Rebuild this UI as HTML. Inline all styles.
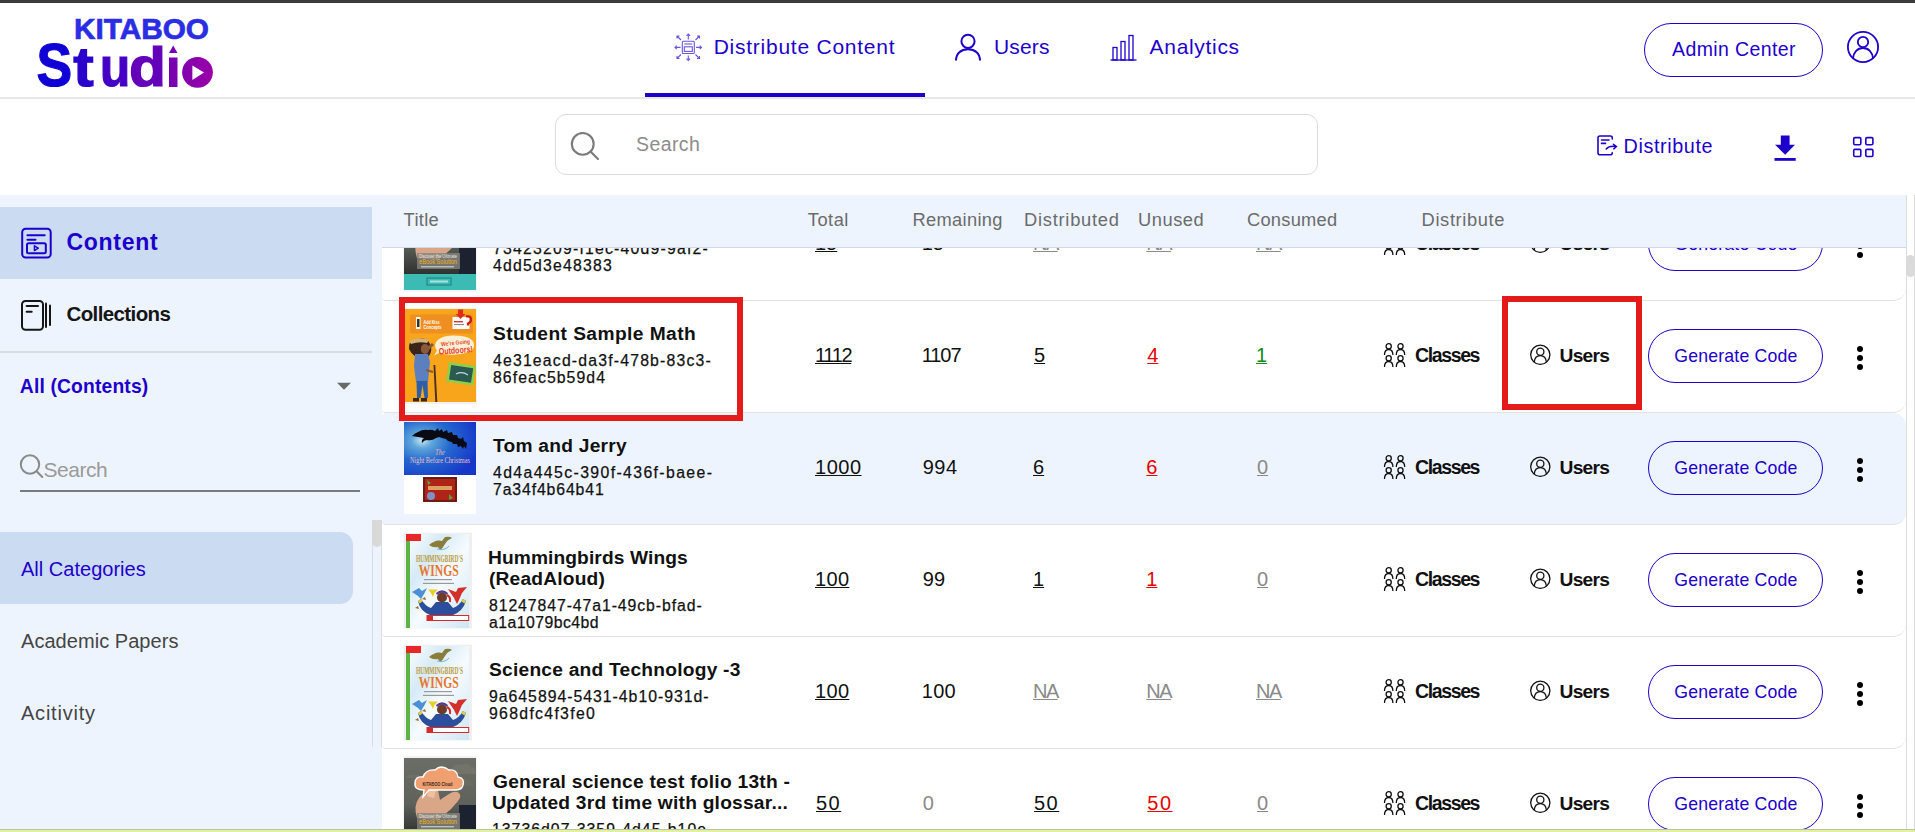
<!DOCTYPE html><html><head><meta charset="utf-8"><style>
html,body{margin:0;padding:0;width:1915px;height:832px;overflow:hidden;background:#fff;font-family:"Liberation Sans",sans-serif}
.t{position:absolute;white-space:pre}
</style></head><body><div style="position:absolute;left:0px;top:0px;width:1915px;height:99px;background:#fff"></div>
<div style="position:absolute;left:0px;top:0px;width:1915px;height:3px;background:#3c3c3c"></div>
<div style="position:absolute;left:0px;top:97px;width:1915px;height:2px;background:#e8e8e8"></div>
<svg style="position:absolute;left:30px;top:10px" width="200" height="85" viewBox="0 0 200 85">
<defs><linearGradient id="lg" x1="8" y1="0" x2="183" y2="0" gradientUnits="userSpaceOnUse">
<stop offset="0" stop-color="#0a00d6"/><stop offset="1" stop-color="#9a00a6"/></linearGradient></defs>
<text x="44" y="29.4" font-family="Liberation Sans" font-weight="bold" font-size="29.8" fill="#2a2de4" stroke="#2a2de4" stroke-width="0.7" textLength="135" lengthAdjust="spacingAndGlyphs">KITABOO</text>
<g font-family="Liberation Sans" font-weight="bold">
<text fill="#1000d6" stroke="#1000d6" stroke-width="1.2" font-size="62" transform="translate(6.46,76.4) scale(0.862,1)">S</text>
<text fill="#2a00cc" stroke="#2a00cc" stroke-width="1.2" font-size="55" transform="translate(43.25,76.4) scale(1.118,1)">t</text>
<text fill="#4400c4" stroke="#4400c4" stroke-width="1.2" font-size="55" transform="translate(69.94,76.4) scale(0.9,1)">u</text>
<text fill="#6400ba" stroke="#6400ba" stroke-width="1.2" font-size="55" transform="translate(99.11,76.4) scale(1.1,1)">d</text>
</g>
<rect x="139" y="47.5" width="8.5" height="29.5" fill="url(#lg)"/>
<path d="M139 43 L143.2 35.6 L147.5 43 Z" fill="url(#lg)"/>
<circle cx="167.5" cy="62.3" r="15.4" fill="url(#lg)"/>
<path d="M162.4 55.5 L174 62.5 L162.4 70 Z" fill="#fff"/>
</svg>
<svg style="position:absolute;left:670px;top:30px" width="36" height="34" viewBox="0 0 36 34"><g stroke="#6b55e0" stroke-width="1.1" fill="none">
<rect x="12.3" y="11.3" width="12" height="12.2" rx="1"/>
<line x1="14.3" y1="14" x2="22.3" y2="14"/><rect x="14.3" y="16.8" width="8" height="4.6"/>
<path d="M18.3 9.5 V4 M16.5 5.8 L18.3 4 L20.1 5.8"/>
<path d="M18.3 25.5 V30.5 M16.5 28.7 L18.3 30.5 L20.1 28.7"/>
<path d="M10.5 17.4 H5 M6.8 15.6 L5 17.4 L6.8 19.2"/>
<path d="M26 17.4 H31.5 M29.7 15.6 L31.5 17.4 L29.7 19.2"/>
<path d="M11 10 L7 6 M7 8.5 V6 H9.5"/><path d="M25.5 10 L29.5 6 M27 6 H29.5 V8.5"/>
<path d="M11 24.5 L7 28.5 M7 26 V28.5 H9.5"/><path d="M25.5 24.5 L29.5 28.5 M29.5 26 V28.5 H27"/>
</g></svg>
<div class="t" style="left:713.70px;top:35.92px;font-size:21px;line-height:21px;color:#1e00cc;letter-spacing:0.750px;">Distribute Content</div>
<div style="position:absolute;left:645px;top:93px;width:280px;height:4px;background:#1e00cc"></div>
<svg style="position:absolute;left:950px;top:30px" width="36" height="34" viewBox="0 0 36 34"><g stroke="#1e00cc" stroke-width="2" fill="none">
<circle cx="18" cy="11.3" r="6.6"/><path d="M6 30.5 C6 23.5 11 19.2 18 19.2 C25 19.2 30 23.5 30 30.5"/></g></svg>
<div class="t" style="left:994.00px;top:36.22px;font-size:21px;line-height:21px;color:#1e00cc;letter-spacing:0.166px;">Users</div>
<svg style="position:absolute;left:1106px;top:30px" width="36" height="34" viewBox="0 0 36 34"><g stroke="#1e00cc" stroke-width="1.3" fill="none">
<path d="M4.5 30 H30.5"/><rect x="7" y="17.5" width="4" height="12.5"/><rect x="15" y="11.5" width="4" height="18.5"/><rect x="23" y="5.5" width="4" height="24.5"/></g></svg>
<div class="t" style="left:1149.60px;top:36.22px;font-size:21px;line-height:21px;color:#1e00cc;letter-spacing:0.684px;">Analytics</div>
<div style="position:absolute;left:1644px;top:23px;width:179px;height:54px;border:1.3px solid #1e00cc;border-radius:27px;box-sizing:border-box"></div>
<div class="t" style="left:1672.00px;top:39.99px;font-size:19.5px;line-height:19.5px;color:#1e00cc;letter-spacing:0.389px;">Admin Center</div>
<svg style="position:absolute;left:1845px;top:29px" width="36" height="36" viewBox="0 0 36 36"><g stroke="#1e00cc" stroke-width="1.8" fill="none">
<circle cx="18" cy="18" r="15.1"/><circle cx="18" cy="13" r="5.2"/>
<path d="M8 29.5 C8.5 23 12.5 19 18 19 C23.5 19 27.5 23 28 29.5"/></g></svg>
<div style="position:absolute;left:0px;top:99px;width:1915px;height:96px;background:#fff"></div>
<div style="position:absolute;left:555px;top:114px;width:763px;height:61px;border:1px solid #dcdcdc;border-radius:11px;box-sizing:border-box;background:#fff"></div>
<svg style="position:absolute;left:566px;top:128px" width="36" height="36" viewBox="0 0 36 36"><g stroke="#7a7a7a" stroke-width="2.1" fill="none" stroke-linecap="round">
<circle cx="16.75" cy="15.9" r="10.9"/><path d="M24.5 23.6 L32 31"/></g></svg>
<div class="t" style="left:636.00px;top:135.09px;font-size:19.5px;line-height:19.5px;color:#8c8c8c;letter-spacing:0.412px;">Search</div>
<svg style="position:absolute;left:1594px;top:132px" width="26" height="26" viewBox="0 0 26 26"><g stroke="#1e00cc" stroke-width="1.6" fill="none" stroke-linecap="round">
<path d="M18.3 7 V6 Q18.3 4 16.3 4 H6 Q4 4 4 6 V20.8 Q4 22.8 6 22.8 H16.3 Q18.3 22.8 18.3 20.8"/>
<path d="M7.5 8 H15 M7.5 11.4 H11.5"/><path d="M12.2 17 Q15 13.6 21.5 14.4"/><path d="M19.5 12.3 L22.3 14.5 L19.8 16.8"/></g></svg>
<div class="t" style="left:1623.50px;top:137.24px;font-size:19.8px;line-height:19.8px;color:#1e00cc;letter-spacing:0.606px;">Distribute</div>
<svg style="position:absolute;left:1770px;top:130px" width="30" height="34" viewBox="0 0 30 34"><path d="M10.8 5.6 H19.6 V14.7 H25 L15.2 24.7 L5 14.7 H10.8 Z" fill="#1e00cc"/><rect x="4.5" y="28" width="21.2" height="2.8" fill="#1e00cc"/></svg>
<svg style="position:absolute;left:1848px;top:132px" width="30" height="30" viewBox="0 0 30 30"><g stroke="#1e00cc" stroke-width="1.6" fill="none">
<rect x="5.7" y="5.6" width="7.1" height="7.1" rx="1.2"/><rect x="17.8" y="5.6" width="7.1" height="7.1" rx="1.2"/>
<rect x="5.7" y="17.4" width="7.1" height="7.1" rx="1.2"/><rect x="17.8" y="17.4" width="7.1" height="7.1" rx="1.2"/></g></svg>
<div style="position:absolute;left:0px;top:195px;width:382px;height:637px;background:#edf4fe"></div>
<div style="position:absolute;left:0px;top:207px;width:372px;height:72px;background:#cadbf2"></div>
<svg style="position:absolute;left:16px;top:222px" width="40" height="40" viewBox="0 0 40 40"><g stroke="#1e00cc" stroke-width="2" fill="none" stroke-linecap="round">
<rect x="6.2" y="6.8" width="28.5" height="28.8" rx="3.5"/><path d="M11.4 13.2 H28.7 M11.4 17.7 H19.5"/>
<rect x="11" y="21.2" width="18.8" height="10.1" rx="1.5"/><path d="M18.4 23.8 L22.3 26.2 L18.4 28.6 Z" stroke-width="1.4" stroke-linejoin="round"/></g></svg>
<div class="t" style="left:66.50px;top:230.53px;font-size:23px;line-height:23px;color:#1e00cc;font-weight:bold;letter-spacing:0.715px;">Content</div>
<svg style="position:absolute;left:16px;top:295px" width="40" height="40" viewBox="0 0 40 40"><g stroke="#161616" stroke-width="2" fill="none" stroke-linecap="round">
<rect x="6" y="5.9" width="21" height="28.9" rx="3.5"/><path d="M10.6 11.1 H22 M10.6 16.8 H15.7"/>
<path d="M30 8.5 V32" /><path d="M34 10.5 V30"/></g></svg>
<div class="t" style="left:66.50px;top:304.04px;font-size:20.5px;line-height:20.5px;color:#161616;font-weight:bold;letter-spacing:-0.609px;font-weight:600;">Collections</div>
<div style="position:absolute;left:0px;top:351px;width:372px;height:2px;background:#dcdcdc"></div>
<div class="t" style="left:19.80px;top:377.16px;font-size:19.3px;line-height:19.3px;color:#1e00cc;font-weight:bold;letter-spacing:0.157px;">All (Contents)</div>
<svg style="position:absolute;left:332px;top:378px" width="24" height="16" viewBox="0 0 24 16"><path d="M5 4.7 H19 L12 11.7 Z" fill="#6a6a6a"/></svg>
<svg style="position:absolute;left:16px;top:451px" width="32" height="32" viewBox="0 0 32 32"><g stroke="#8a8a8a" stroke-width="2" fill="none" stroke-linecap="round">
<circle cx="14" cy="13.5" r="9.2"/><path d="M20.6 20.2 L26.3 26"/></g></svg>
<div class="t" style="left:43.60px;top:459.22px;font-size:21px;line-height:21px;color:#9a9a9a;letter-spacing:-0.492px;">Search</div>
<div style="position:absolute;left:20px;top:490px;width:340px;height:2px;background:#7a7a7a"></div>
<div style="position:absolute;left:0px;top:532px;width:353px;height:72px;background:#cadbf2;border-radius:0 13px 13px 0"></div>
<div class="t" style="left:21.00px;top:558.87px;font-size:20px;line-height:20px;color:#1e00cc;letter-spacing:0.015px;">All Categories</div>
<div class="t" style="left:21.00px;top:630.77px;font-size:20px;line-height:20px;color:#454545;letter-spacing:0.047px;">Academic Papers</div>
<div class="t" style="left:21.00px;top:702.67px;font-size:20px;line-height:20px;color:#454545;letter-spacing:0.777px;">Acitivity</div>
<div style="position:absolute;left:372px;top:520px;width:10px;height:227px;border:1px solid #d9dde3;border-bottom:none;box-sizing:border-box;background:#edf4fe"></div>
<div style="position:absolute;left:372px;top:520px;width:10px;height:27px;background:#d9d9d9;border-radius:0 0 5px 5px"></div>
<div style="position:absolute;left:382px;top:195px;width:1524px;height:52px;background:#edf4fe"></div>
<div style="position:absolute;left:382px;top:247px;width:1524px;height:582px;overflow:hidden"><div style="position:absolute;left:-382px;top:-247px;width:1915px;height:900px"><div style="position:absolute;left:382px;top:189px;width:1524px;height:112px;background:#fff;border-bottom:1px solid #e2e2e2;border-radius:4px 13px 13px 4px;box-sizing:border-box"></div><svg style="position:absolute;left:403px;top:196px" width="74" height="96" viewBox="0 0 74 96">
<rect x="0" y="0" width="74" height="96" fill="#f4f4f4"/>
<defs><linearGradient id="eg" x1="0" y1="0" x2="0" y2="1"><stop offset="0" stop-color="#6a6e66"/><stop offset="0.6" stop-color="#5e625b"/><stop offset="1" stop-color="#2e312f"/></linearGradient></defs>
<rect x="1" y="2" width="72" height="76" fill="url(#eg)"/>
<path d="M48 14 q3 -7 10 -5 q6 -4 10 2 q6 0 5 7 H46 q-3 -2 2 -4z" fill="#7d7870" opacity="0.6"/>
<path d="M3 22 q2 -5 8 -3 q5 -2 7 3 H3z" fill="#7a756d" opacity="0.5"/>
<path d="M46 26 q3 -5 9 -3 q5 -3 9 1 q6 0 6 6 H46z" fill="#757068" opacity="0.45"/>
<rect x="56" y="49" width="17" height="29" fill="#1c2230"/>
<path d="M14 62 q-4 -12 2 -20 q3 -5 7 -3 l2 -3 q2 -6 5 -7 q4 -1 5 5 l2 10 q4 -3 9 -6 q6 -4 10 -1 q3 3 -1 8 q-6 8 -14 14 l-6 5z" fill="#d9a688"/>
<path d="M24 40 l2 -8 q2 -5 5 -4 q3 1 2 6 l-2 8z" fill="#ecc0a0"/>
<path d="M12 27 q0 -7 8 -6 q3 -8 12 -7 q6 -6 14 0 q8 -1 9 7 q7 1 5 8 q-1 5 -8 5 H26 l-6 7 l1 -7 q-10 0 -9 -7z" fill="#f0a070" stroke="#fff" stroke-width="1.4"/>
<text x="19.5" y="29.5" font-family="Liberation Sans" font-weight="bold" font-size="5" fill="#3a2a20" textLength="30" lengthAdjust="spacingAndGlyphs">KITABOO Cloud</text>
<rect x="14" y="57" width="43" height="16" fill="#83837c" opacity="0.8"/>
<text x="16" y="61.5" font-family="Liberation Sans" font-size="4.5" fill="#e8e8e8" textLength="38" lengthAdjust="spacingAndGlyphs">Discover the Ultimate</text>
<text x="16" y="67.5" font-family="Liberation Sans" font-size="7" fill="#f0b020" textLength="38" lengthAdjust="spacingAndGlyphs">eBook Solution</text>
<rect x="18" y="70" width="33" height="1.4" fill="#ddd" opacity="0.7"/>
<rect x="1" y="78" width="72" height="16" fill="#3cbab4"/>
<rect x="24" y="82" width="24" height="7" fill="none" stroke="#1d7f7a" stroke-width="1"/>
<rect x="27" y="84.5" width="18" height="2" fill="#d8f4f2" opacity="0.7"/>
</svg><div class="t" style="left:493.00px;top:241.42px;font-size:15.8px;line-height:15.8px;color:#111;letter-spacing:1.208px;-webkit-text-stroke:0.25px #111;">73423209-f1ec-40d9-9af2-</div><div class="t" style="left:493.00px;top:258.42px;font-size:15.8px;line-height:15.8px;color:#111;letter-spacing:1.215px;-webkit-text-stroke:0.25px #111;">4dd5d3e48383</div><div class="t" style="left:815.00px;top:233.07px;font-size:20px;line-height:20px;color:#111;text-decoration:underline;text-decoration-thickness:1px;text-underline-offset:1px;">15</div><div class="t" style="left:921.70px;top:233.07px;font-size:20px;line-height:20px;color:#111;">15</div><div class="t" style="left:1033.00px;top:233.07px;font-size:20px;line-height:20px;color:#8a8a8a;letter-spacing:-1.543px;text-decoration:underline;text-decoration-thickness:1px;text-underline-offset:1px;">NA</div><div class="t" style="left:1146.30px;top:233.07px;font-size:20px;line-height:20px;color:#8a8a8a;letter-spacing:-1.543px;text-decoration:underline;text-decoration-thickness:1px;text-underline-offset:1px;">NA</div><div class="t" style="left:1256.00px;top:233.07px;font-size:20px;line-height:20px;color:#8a8a8a;letter-spacing:-1.543px;text-decoration:underline;text-decoration-thickness:1px;text-underline-offset:1px;">NA</div><svg style="position:absolute;left:1380px;top:228px" width="28" height="30" viewBox="0 0 28 30"><g stroke="#111" stroke-width="1.3" fill="none">
<circle cx="8.7" cy="6.3" r="2.6"/><path d="M4.5 15 q0 -5.5 4.2 -5.5 q4.2 0 4.2 5.5"/>
<circle cx="20.5" cy="6.3" r="2.6"/><path d="M16.3 15 q0 -5.5 4.2 -5.5 q4.2 0 4.2 5.5"/>
<circle cx="8.7" cy="18.3" r="2.6"/><path d="M4.5 27 q0 -5.5 4.2 -5.5 q4.2 0 4.2 5.5"/>
<circle cx="20.5" cy="18.3" r="2.6"/><path d="M16.3 27 q0 -5.5 4.2 -5.5 q4.2 0 4.2 5.5"/></g></svg><div class="t" style="left:1415.00px;top:234.29px;font-size:19.5px;line-height:19.5px;color:#111;font-weight:bold;letter-spacing:-1.380px;">Classes</div><svg style="position:absolute;left:1527px;top:230px" width="28" height="28" viewBox="0 0 28 28"><g stroke="#111" stroke-width="1.3" fill="none">
<circle cx="13.3" cy="12.8" r="9.6"/><circle cx="13.3" cy="9.8" r="3.6"/>
<path d="M7.2 20.3 q0.5 -6.7 6.1 -6.7 q5.6 0 6.1 6.7"/></g></svg><div class="t" style="left:1559.60px;top:234.14px;font-size:19.2px;line-height:19.2px;color:#111;font-weight:bold;letter-spacing:-0.766px;">Users</div><div style="position:absolute;left:1648px;top:217px;width:175px;height:54px;border:1.3px solid #1e00cc;border-radius:27px;box-sizing:border-box"></div><div class="t" style="left:1674.20px;top:235.51px;font-size:17.7px;line-height:17.7px;color:#1e00cc;letter-spacing:0.183px;">Generate Code</div><svg style="position:absolute;left:1852px;top:230px" width="16" height="32" viewBox="0 0 16 32"><g fill="#000"><circle cx="8" cy="7" r="3"/><circle cx="8" cy="16" r="3"/><circle cx="8" cy="25" r="3"/></g></svg><div style="position:absolute;left:382px;top:301px;width:1524px;height:112px;background:#fff;border-bottom:1px solid #e2e2e2;border-radius:4px 13px 13px 4px;box-sizing:border-box"></div><svg style="position:absolute;left:404px;top:308px" width="73" height="96" viewBox="0 0 73 96">
<rect x="0" y="0" width="73" height="96" fill="#f2f2f2"/>
<rect x="1" y="1" width="71" height="93" fill="#f8a51c"/>
<rect x="6" y="6.5" width="63" height="19" rx="2.5" fill="#ef8f22"/>
<rect x="12" y="9" width="4.5" height="12" fill="#fff7e0"/><rect x="13" y="11" width="2.5" height="8" fill="#333"/>
<text x="19.5" y="15.5" font-family="Liberation Sans" font-weight="bold" font-size="5" fill="#fff" textLength="16" lengthAdjust="spacingAndGlyphs">Add Kiss</text>
<text x="19.5" y="20.5" font-family="Liberation Sans" font-weight="bold" font-size="5" fill="#fff" textLength="18" lengthAdjust="spacingAndGlyphs">Concepts</text>
<rect x="48.5" y="9" width="17" height="12" fill="#fff"/><path d="M54 1.5 h5 v4.5 h2.5 l-5 5 l-5 -5 h2.5z" fill="#e22a1a"/>
<rect x="50" y="13" width="9" height="1.4" fill="#d33"/><rect x="50" y="16" width="10" height="1.1" fill="#888"/>
<path d="M62 8.5 q5 -1 5 3 q0 3 -3 4 v2" stroke="#c81818" stroke-width="2.2" fill="none"/>
<g transform="translate(0,10)"><path d="M31 27 q2 -9 18 -9.5 q20 0 21 9 q1 8 -18 10 q-10 1 -16 -2 l-6 3 l3 -5 q-2 -2 -2 -5.5z" fill="#fdf0d6"/>
<text x="37" y="27" font-family="Liberation Sans" font-weight="bold" font-size="6" fill="#e24a2e" textLength="29" lengthAdjust="spacingAndGlyphs" transform="rotate(-6 50 25)">We're Going</text>
<text x="34.7" y="35.5" font-family="Liberation Sans" font-weight="bold" font-size="9" fill="#e5392a" textLength="34" lengthAdjust="spacingAndGlyphs" transform="rotate(-4 50 32)">Outdoors!</text>
</g>
<path d="M45 54 l27 4 l-3 19.5 l-27 -4z" fill="#8ccf4a"/><path d="M47.2 57 l22 3.2 l-2.2 14.5 l-22 -3.2z" fill="#2a5a50"/>
<path d="M52 66 q6 -3 12 1" stroke="#c0d8e8" stroke-width="1.2" fill="none"/>
<g transform="translate(0,10)"><path d="M5 31 q-1 -8 8 -10 q10 -2 13 5 q3 6 -1 12 l-6 2 q-10 0 -14 -9z" fill="#3a2418"/>
<path d="M5 23 q9 -5 20 -1 l-2 3 q-8 -2 -16 1z" fill="#d8b27a"/>
<ellipse cx="21" cy="31" rx="4.2" ry="5" fill="#8a5a3a"/>
<path d="M23 29 l5 -4 l2 2 l-5 5z" fill="#8a5a3a"/>
<path d="M11 36 h13 l2 8 l-2 20 h-12 l-2 -16z" fill="#5b7fbf"/>
<path d="M12.5 63 h11 l0.5 17 h-3.5 l-2 -13 l-2 13 h-3.5z" fill="#2f5ea8"/>
<path d="M9 80 h6 v3.5 h-6z M17 80 h6 v3.5 h-6z" fill="#3a2818"/>
</g>
<path d="M29.5 57 l1.8 0 l2 37 h-2z" fill="#4a3020"/>
<path d="M22 62 l7 2" stroke="#8a5a3a" stroke-width="2"/>
</svg><div class="t" style="left:493.00px;top:323.64px;font-size:19.2px;line-height:19.2px;color:#111;font-weight:bold;letter-spacing:0.424px;">Student Sample Math</div><div class="t" style="left:493.00px;top:353.42px;font-size:15.8px;line-height:15.8px;color:#111;letter-spacing:1.182px;-webkit-text-stroke:0.25px #111;">4e31eacd-da3f-478b-83c3-</div><div class="t" style="left:493.00px;top:370.42px;font-size:15.8px;line-height:15.8px;color:#111;letter-spacing:1.077px;-webkit-text-stroke:0.25px #111;">86feac5b59d4</div><div class="t" style="left:815.00px;top:345.07px;font-size:20px;line-height:20px;color:#111;letter-spacing:-1.300px;text-decoration:underline;text-decoration-thickness:1px;text-underline-offset:1px;">1112</div><div class="t" style="left:921.70px;top:345.07px;font-size:20px;line-height:20px;color:#111;letter-spacing:-1.062px;">1107</div><div class="t" style="left:1034.00px;top:345.07px;font-size:20px;line-height:20px;color:#111;text-decoration:underline;text-decoration-thickness:1px;text-underline-offset:1px;">5</div><div class="t" style="left:1147.30px;top:345.07px;font-size:20px;line-height:20px;color:#e60000;text-decoration:underline;text-decoration-thickness:1px;text-underline-offset:1px;">4</div><div class="t" style="left:1256.00px;top:345.07px;font-size:20px;line-height:20px;color:#138a13;text-decoration:underline;text-decoration-thickness:1px;text-underline-offset:1px;">1</div><svg style="position:absolute;left:1380px;top:340px" width="28" height="30" viewBox="0 0 28 30"><g stroke="#111" stroke-width="1.3" fill="none">
<circle cx="8.7" cy="6.3" r="2.6"/><path d="M4.5 15 q0 -5.5 4.2 -5.5 q4.2 0 4.2 5.5"/>
<circle cx="20.5" cy="6.3" r="2.6"/><path d="M16.3 15 q0 -5.5 4.2 -5.5 q4.2 0 4.2 5.5"/>
<circle cx="8.7" cy="18.3" r="2.6"/><path d="M4.5 27 q0 -5.5 4.2 -5.5 q4.2 0 4.2 5.5"/>
<circle cx="20.5" cy="18.3" r="2.6"/><path d="M16.3 27 q0 -5.5 4.2 -5.5 q4.2 0 4.2 5.5"/></g></svg><div class="t" style="left:1415.00px;top:346.29px;font-size:19.5px;line-height:19.5px;color:#111;font-weight:bold;letter-spacing:-1.380px;">Classes</div><svg style="position:absolute;left:1527px;top:342px" width="28" height="28" viewBox="0 0 28 28"><g stroke="#111" stroke-width="1.3" fill="none">
<circle cx="13.3" cy="12.8" r="9.6"/><circle cx="13.3" cy="9.8" r="3.6"/>
<path d="M7.2 20.3 q0.5 -6.7 6.1 -6.7 q5.6 0 6.1 6.7"/></g></svg><div class="t" style="left:1559.60px;top:346.14px;font-size:19.2px;line-height:19.2px;color:#111;font-weight:bold;letter-spacing:-0.766px;">Users</div><div style="position:absolute;left:1648px;top:329px;width:175px;height:54px;border:1.3px solid #1e00cc;border-radius:27px;box-sizing:border-box"></div><div class="t" style="left:1674.20px;top:347.51px;font-size:17.7px;line-height:17.7px;color:#1e00cc;letter-spacing:0.183px;">Generate Code</div><svg style="position:absolute;left:1852px;top:342px" width="16" height="32" viewBox="0 0 16 32"><g fill="#000"><circle cx="8" cy="7" r="3"/><circle cx="8" cy="16" r="3"/><circle cx="8" cy="25" r="3"/></g></svg><div style="position:absolute;left:382px;top:413px;width:1524px;height:112px;background:#edf4fe;border-bottom:1px solid #e2e2e2;border-radius:4px 13px 13px 4px;box-sizing:border-box"></div><svg style="position:absolute;left:404px;top:422px" width="72" height="94" viewBox="0 0 72 94">
<defs><radialGradient id="tg" cx="0.25" cy="0.35" r="0.8"><stop offset="0" stop-color="#c8e6f2"/><stop offset="0.18" stop-color="#5fa6da"/><stop offset="0.5" stop-color="#2468d0"/><stop offset="1" stop-color="#1637c8"/></radialGradient></defs>
<rect x="0" y="0" width="72" height="92" fill="#fff"/>
<rect x="0" y="0" width="72" height="53" fill="url(#tg)"/>
<path d="M8 14 q3 -3 6 -4 q5 -3 10 -2 q4 -1 7 1 l3 -3 l1 3 l3 -2 l1 3 l4 -2 l1 3 l4 -1 l1 3 l4 0 l1 3 l3 1 l2 -2 l1 4 l3 2 l-1 6 l-2 -3 l-1 3 l-2 -3 l-3 1 l-1 -3 l-4 0 l-1 -2 l-4 -1 l-2 -2 l-4 -1 l-3 -1 l-3 1 q-4 3 -9 2 q-3 0 -5 3 q-1 -3 2 -5z" fill="#0a0a14"/>
<text x="31" y="33" font-family="Liberation Serif" font-style="italic" font-size="8" fill="#e8b0b8" textLength="10" lengthAdjust="spacingAndGlyphs">The</text>
<text x="6" y="40.5" font-family="Liberation Serif" font-size="7.5" fill="#efbfc6" textLength="60" lengthAdjust="spacingAndGlyphs">Night Before Christmas</text>
<rect x="19" y="55" width="34" height="25" fill="#b02418"/>
<rect x="20" y="56" width="32" height="23" fill="none" stroke="#2a1510" stroke-width="1"/>
<path d="M23 58 l4 3 l-3 2z M45 72 l4 4 l-4 2z M46 58 l3 2" fill="#5aa040"/>
<rect x="24" y="64" width="24" height="4" fill="#e8c070" opacity="0.8"/>
<circle cx="27" cy="74" r="4" fill="#8090c8"/>
</svg><div class="t" style="left:493.00px;top:435.64px;font-size:19.2px;line-height:19.2px;color:#111;font-weight:bold;letter-spacing:0.239px;">Tom and Jerry</div><div class="t" style="left:493.00px;top:465.42px;font-size:15.8px;line-height:15.8px;color:#111;letter-spacing:1.386px;-webkit-text-stroke:0.25px #111;">4d4a445c-390f-436f-baee-</div><div class="t" style="left:493.00px;top:482.42px;font-size:15.8px;line-height:15.8px;color:#111;letter-spacing:0.878px;-webkit-text-stroke:0.25px #111;">7a34f4b64b41</div><div class="t" style="left:815.00px;top:457.07px;font-size:20px;line-height:20px;color:#111;letter-spacing:0.510px;text-decoration:underline;text-decoration-thickness:1px;text-underline-offset:1px;">1000</div><div class="t" style="left:922.70px;top:457.07px;font-size:20px;line-height:20px;color:#111;letter-spacing:0.477px;">994</div><div class="t" style="left:1033.00px;top:457.07px;font-size:20px;line-height:20px;color:#111;text-decoration:underline;text-decoration-thickness:1px;text-underline-offset:1px;">6</div><div class="t" style="left:1146.30px;top:457.07px;font-size:20px;line-height:20px;color:#e60000;text-decoration:underline;text-decoration-thickness:1px;text-underline-offset:1px;">6</div><div class="t" style="left:1257.00px;top:457.07px;font-size:20px;line-height:20px;color:#8a8a8a;text-decoration:underline;text-decoration-thickness:1px;text-underline-offset:1px;">0</div><svg style="position:absolute;left:1380px;top:452px" width="28" height="30" viewBox="0 0 28 30"><g stroke="#111" stroke-width="1.3" fill="none">
<circle cx="8.7" cy="6.3" r="2.6"/><path d="M4.5 15 q0 -5.5 4.2 -5.5 q4.2 0 4.2 5.5"/>
<circle cx="20.5" cy="6.3" r="2.6"/><path d="M16.3 15 q0 -5.5 4.2 -5.5 q4.2 0 4.2 5.5"/>
<circle cx="8.7" cy="18.3" r="2.6"/><path d="M4.5 27 q0 -5.5 4.2 -5.5 q4.2 0 4.2 5.5"/>
<circle cx="20.5" cy="18.3" r="2.6"/><path d="M16.3 27 q0 -5.5 4.2 -5.5 q4.2 0 4.2 5.5"/></g></svg><div class="t" style="left:1415.00px;top:458.29px;font-size:19.5px;line-height:19.5px;color:#111;font-weight:bold;letter-spacing:-1.380px;">Classes</div><svg style="position:absolute;left:1527px;top:454px" width="28" height="28" viewBox="0 0 28 28"><g stroke="#111" stroke-width="1.3" fill="none">
<circle cx="13.3" cy="12.8" r="9.6"/><circle cx="13.3" cy="9.8" r="3.6"/>
<path d="M7.2 20.3 q0.5 -6.7 6.1 -6.7 q5.6 0 6.1 6.7"/></g></svg><div class="t" style="left:1559.60px;top:458.14px;font-size:19.2px;line-height:19.2px;color:#111;font-weight:bold;letter-spacing:-0.766px;">Users</div><div style="position:absolute;left:1648px;top:441px;width:175px;height:54px;border:1.3px solid #1e00cc;border-radius:27px;box-sizing:border-box"></div><div class="t" style="left:1674.20px;top:459.51px;font-size:17.7px;line-height:17.7px;color:#1e00cc;letter-spacing:0.183px;">Generate Code</div><svg style="position:absolute;left:1852px;top:454px" width="16" height="32" viewBox="0 0 16 32"><g fill="#000"><circle cx="8" cy="7" r="3"/><circle cx="8" cy="16" r="3"/><circle cx="8" cy="25" r="3"/></g></svg><div style="position:absolute;left:382px;top:525px;width:1524px;height:112px;background:#fff;border-bottom:1px solid #e2e2e2;border-radius:4px 13px 13px 4px;box-sizing:border-box"></div><svg style="position:absolute;left:403px;top:532px" width="70" height="97" viewBox="0 0 70 97">
<defs><linearGradient id="wg" x1="0" y1="0" x2="1" y2="1"><stop offset="0" stop-color="#ffffff"/><stop offset="0.3" stop-color="#d6eaf6"/><stop offset="0.55" stop-color="#f6fbfe"/><stop offset="1" stop-color="#cfe6f4"/></linearGradient></defs>
<rect x="0.5" y="0.75" width="68.5" height="95.7" fill="#efefef"/>
<rect x="3" y="2" width="63" height="94" fill="url(#wg)"/>
<rect x="3" y="8" width="4" height="88" fill="#5cb446"/>
<rect x="3" y="2" width="15" height="7" fill="#e8262a"/>
<path d="M26 13 q7 -6 13 -4 l3 -4 q5 -1 7 1 q-5 2 -7 6 q-2 4 -5 6 l-2 -3 q-5 1 -9 -2z" fill="#8a7c3a"/>
<path d="M34 17 q8 2 12 -3" stroke="#7ab4dc" stroke-width="1" fill="none"/>
<text x="13" y="30" font-family="Liberation Serif" font-weight="bold" font-size="10" fill="#b99a3c" textLength="47" lengthAdjust="spacingAndGlyphs">HUMMINGBIRD'S</text>
<text x="15.7" y="44" font-family="Liberation Serif" font-weight="bold" font-size="16.5" fill="#e5762e" textLength="40" lengthAdjust="spacingAndGlyphs">WINGS</text>
<rect x="21" y="47" width="28" height="1.2" fill="#9a9a9a"/><rect x="20" y="50.8" width="31" height="1.2" fill="#9a9a9a"/>
<path d="M9 60 l7 -4 l3 3 l5 -3 l-3 6 l-3 5 l-3 -3z" fill="#4b8fd6"/>
<path d="M25 57.5 l10 0 l-3.5 3.5 l-1.5 4 l-2 -4z" fill="#e6d02a"/>
<path d="M45 57 l8 3 l2 -4 l9 -1 l-5 6 l-3 7 l-2 4 l-3 -6z" fill="#d3302c"/>
<path d="M19 67 l3 -2 l1 3z M12 76 l3 -2 l1 3z M55 75 l3 -2 l1 3z" fill="#9a6a3a"/>
<path d="M15 69 l3 -2 q4 7 10 9 l5 -6 h12 l5 6 q6 -2 10 -9 l3 2 q-3 10 -13 14 l-3 5 h-17 l-3 -5 q-10 -4 -12 -14z" fill="#2b4f9c"/>
<path d="M15 69 l3 -2 l1.5 2.5 l-3 2z M60 67 l3 2 l-1.5 2.5 l-3 -2z" fill="#e8d030"/>
<circle cx="39" cy="65.5" r="5" fill="#6b3c28"/><path d="M33.5 62 q5.5 -5 11 0" stroke="#5a3a8a" stroke-width="2.2" fill="none"/>
<path d="M44 63 q4 2 3 7" stroke="#d02a2a" stroke-width="2" fill="none"/>
<rect x="24" y="83.5" width="41.7" height="5" fill="#fff" stroke="#d82a2a" stroke-width="1"/>
<rect x="24" y="83.5" width="6" height="5" fill="#d82a2a"/>
</svg><div class="t" style="left:488.00px;top:547.64px;font-size:19.2px;line-height:19.2px;color:#111;font-weight:bold;letter-spacing:0.093px;">Hummingbirds Wings</div><div class="t" style="left:489.00px;top:568.64px;font-size:19.2px;line-height:19.2px;color:#111;font-weight:bold;letter-spacing:0.184px;">(ReadAloud)</div><div class="t" style="left:489.00px;top:598.42px;font-size:15.8px;line-height:15.8px;color:#111;letter-spacing:0.921px;-webkit-text-stroke:0.25px #111;">81247847-47a1-49cb-bfad-</div><div class="t" style="left:489.00px;top:615.42px;font-size:15.8px;line-height:15.8px;color:#111;letter-spacing:0.450px;-webkit-text-stroke:0.25px #111;">a1a1079bc4bd</div><div class="t" style="left:815.00px;top:569.07px;font-size:20px;line-height:20px;color:#111;letter-spacing:0.327px;text-decoration:underline;text-decoration-thickness:1px;text-underline-offset:1px;">100</div><div class="t" style="left:922.70px;top:569.07px;font-size:20px;line-height:20px;color:#111;letter-spacing:0.277px;">99</div><div class="t" style="left:1033.00px;top:569.07px;font-size:20px;line-height:20px;color:#111;text-decoration:underline;text-decoration-thickness:1px;text-underline-offset:1px;">1</div><div class="t" style="left:1146.30px;top:569.07px;font-size:20px;line-height:20px;color:#e60000;text-decoration:underline;text-decoration-thickness:1px;text-underline-offset:1px;">1</div><div class="t" style="left:1257.00px;top:569.07px;font-size:20px;line-height:20px;color:#8a8a8a;text-decoration:underline;text-decoration-thickness:1px;text-underline-offset:1px;">0</div><svg style="position:absolute;left:1380px;top:564px" width="28" height="30" viewBox="0 0 28 30"><g stroke="#111" stroke-width="1.3" fill="none">
<circle cx="8.7" cy="6.3" r="2.6"/><path d="M4.5 15 q0 -5.5 4.2 -5.5 q4.2 0 4.2 5.5"/>
<circle cx="20.5" cy="6.3" r="2.6"/><path d="M16.3 15 q0 -5.5 4.2 -5.5 q4.2 0 4.2 5.5"/>
<circle cx="8.7" cy="18.3" r="2.6"/><path d="M4.5 27 q0 -5.5 4.2 -5.5 q4.2 0 4.2 5.5"/>
<circle cx="20.5" cy="18.3" r="2.6"/><path d="M16.3 27 q0 -5.5 4.2 -5.5 q4.2 0 4.2 5.5"/></g></svg><div class="t" style="left:1415.00px;top:570.29px;font-size:19.5px;line-height:19.5px;color:#111;font-weight:bold;letter-spacing:-1.380px;">Classes</div><svg style="position:absolute;left:1527px;top:566px" width="28" height="28" viewBox="0 0 28 28"><g stroke="#111" stroke-width="1.3" fill="none">
<circle cx="13.3" cy="12.8" r="9.6"/><circle cx="13.3" cy="9.8" r="3.6"/>
<path d="M7.2 20.3 q0.5 -6.7 6.1 -6.7 q5.6 0 6.1 6.7"/></g></svg><div class="t" style="left:1559.60px;top:570.14px;font-size:19.2px;line-height:19.2px;color:#111;font-weight:bold;letter-spacing:-0.766px;">Users</div><div style="position:absolute;left:1648px;top:553px;width:175px;height:54px;border:1.3px solid #1e00cc;border-radius:27px;box-sizing:border-box"></div><div class="t" style="left:1674.20px;top:571.51px;font-size:17.7px;line-height:17.7px;color:#1e00cc;letter-spacing:0.183px;">Generate Code</div><svg style="position:absolute;left:1852px;top:566px" width="16" height="32" viewBox="0 0 16 32"><g fill="#000"><circle cx="8" cy="7" r="3"/><circle cx="8" cy="16" r="3"/><circle cx="8" cy="25" r="3"/></g></svg><div style="position:absolute;left:382px;top:637px;width:1524px;height:112px;background:#fff;border-bottom:1px solid #e2e2e2;border-radius:4px 13px 13px 4px;box-sizing:border-box"></div><svg style="position:absolute;left:403px;top:644px" width="70" height="97" viewBox="0 0 70 97">
<defs><linearGradient id="wg" x1="0" y1="0" x2="1" y2="1"><stop offset="0" stop-color="#ffffff"/><stop offset="0.3" stop-color="#d6eaf6"/><stop offset="0.55" stop-color="#f6fbfe"/><stop offset="1" stop-color="#cfe6f4"/></linearGradient></defs>
<rect x="0.5" y="0.75" width="68.5" height="95.7" fill="#efefef"/>
<rect x="3" y="2" width="63" height="94" fill="url(#wg)"/>
<rect x="3" y="8" width="4" height="88" fill="#5cb446"/>
<rect x="3" y="2" width="15" height="7" fill="#e8262a"/>
<path d="M26 13 q7 -6 13 -4 l3 -4 q5 -1 7 1 q-5 2 -7 6 q-2 4 -5 6 l-2 -3 q-5 1 -9 -2z" fill="#8a7c3a"/>
<path d="M34 17 q8 2 12 -3" stroke="#7ab4dc" stroke-width="1" fill="none"/>
<text x="13" y="30" font-family="Liberation Serif" font-weight="bold" font-size="10" fill="#b99a3c" textLength="47" lengthAdjust="spacingAndGlyphs">HUMMINGBIRD'S</text>
<text x="15.7" y="44" font-family="Liberation Serif" font-weight="bold" font-size="16.5" fill="#e5762e" textLength="40" lengthAdjust="spacingAndGlyphs">WINGS</text>
<rect x="21" y="47" width="28" height="1.2" fill="#9a9a9a"/><rect x="20" y="50.8" width="31" height="1.2" fill="#9a9a9a"/>
<path d="M9 60 l7 -4 l3 3 l5 -3 l-3 6 l-3 5 l-3 -3z" fill="#4b8fd6"/>
<path d="M25 57.5 l10 0 l-3.5 3.5 l-1.5 4 l-2 -4z" fill="#e6d02a"/>
<path d="M45 57 l8 3 l2 -4 l9 -1 l-5 6 l-3 7 l-2 4 l-3 -6z" fill="#d3302c"/>
<path d="M19 67 l3 -2 l1 3z M12 76 l3 -2 l1 3z M55 75 l3 -2 l1 3z" fill="#9a6a3a"/>
<path d="M15 69 l3 -2 q4 7 10 9 l5 -6 h12 l5 6 q6 -2 10 -9 l3 2 q-3 10 -13 14 l-3 5 h-17 l-3 -5 q-10 -4 -12 -14z" fill="#2b4f9c"/>
<path d="M15 69 l3 -2 l1.5 2.5 l-3 2z M60 67 l3 2 l-1.5 2.5 l-3 -2z" fill="#e8d030"/>
<circle cx="39" cy="65.5" r="5" fill="#6b3c28"/><path d="M33.5 62 q5.5 -5 11 0" stroke="#5a3a8a" stroke-width="2.2" fill="none"/>
<path d="M44 63 q4 2 3 7" stroke="#d02a2a" stroke-width="2" fill="none"/>
<rect x="24" y="83.5" width="41.7" height="5" fill="#fff" stroke="#d82a2a" stroke-width="1"/>
<rect x="24" y="83.5" width="6" height="5" fill="#d82a2a"/>
</svg><div class="t" style="left:489.00px;top:659.64px;font-size:19.2px;line-height:19.2px;color:#111;font-weight:bold;letter-spacing:0.226px;">Science and Technology -3</div><div class="t" style="left:489.00px;top:689.42px;font-size:15.8px;line-height:15.8px;color:#111;letter-spacing:0.992px;-webkit-text-stroke:0.25px #111;">9a645894-5431-4b10-931d-</div><div class="t" style="left:489.00px;top:706.42px;font-size:15.8px;line-height:15.8px;color:#111;letter-spacing:1.312px;-webkit-text-stroke:0.25px #111;">968dfc4f3fe0</div><div class="t" style="left:815.00px;top:681.07px;font-size:20px;line-height:20px;color:#111;letter-spacing:0.327px;text-decoration:underline;text-decoration-thickness:1px;text-underline-offset:1px;">100</div><div class="t" style="left:921.70px;top:681.07px;font-size:20px;line-height:20px;color:#111;letter-spacing:0.327px;">100</div><div class="t" style="left:1033.00px;top:681.07px;font-size:20px;line-height:20px;color:#8a8a8a;letter-spacing:-1.543px;text-decoration:underline;text-decoration-thickness:1px;text-underline-offset:1px;">NA</div><div class="t" style="left:1146.30px;top:681.07px;font-size:20px;line-height:20px;color:#8a8a8a;letter-spacing:-1.543px;text-decoration:underline;text-decoration-thickness:1px;text-underline-offset:1px;">NA</div><div class="t" style="left:1256.00px;top:681.07px;font-size:20px;line-height:20px;color:#8a8a8a;letter-spacing:-1.543px;text-decoration:underline;text-decoration-thickness:1px;text-underline-offset:1px;">NA</div><svg style="position:absolute;left:1380px;top:676px" width="28" height="30" viewBox="0 0 28 30"><g stroke="#111" stroke-width="1.3" fill="none">
<circle cx="8.7" cy="6.3" r="2.6"/><path d="M4.5 15 q0 -5.5 4.2 -5.5 q4.2 0 4.2 5.5"/>
<circle cx="20.5" cy="6.3" r="2.6"/><path d="M16.3 15 q0 -5.5 4.2 -5.5 q4.2 0 4.2 5.5"/>
<circle cx="8.7" cy="18.3" r="2.6"/><path d="M4.5 27 q0 -5.5 4.2 -5.5 q4.2 0 4.2 5.5"/>
<circle cx="20.5" cy="18.3" r="2.6"/><path d="M16.3 27 q0 -5.5 4.2 -5.5 q4.2 0 4.2 5.5"/></g></svg><div class="t" style="left:1415.00px;top:682.29px;font-size:19.5px;line-height:19.5px;color:#111;font-weight:bold;letter-spacing:-1.380px;">Classes</div><svg style="position:absolute;left:1527px;top:678px" width="28" height="28" viewBox="0 0 28 28"><g stroke="#111" stroke-width="1.3" fill="none">
<circle cx="13.3" cy="12.8" r="9.6"/><circle cx="13.3" cy="9.8" r="3.6"/>
<path d="M7.2 20.3 q0.5 -6.7 6.1 -6.7 q5.6 0 6.1 6.7"/></g></svg><div class="t" style="left:1559.60px;top:682.14px;font-size:19.2px;line-height:19.2px;color:#111;font-weight:bold;letter-spacing:-0.766px;">Users</div><div style="position:absolute;left:1648px;top:665px;width:175px;height:54px;border:1.3px solid #1e00cc;border-radius:27px;box-sizing:border-box"></div><div class="t" style="left:1674.20px;top:683.51px;font-size:17.7px;line-height:17.7px;color:#1e00cc;letter-spacing:0.183px;">Generate Code</div><svg style="position:absolute;left:1852px;top:678px" width="16" height="32" viewBox="0 0 16 32"><g fill="#000"><circle cx="8" cy="7" r="3"/><circle cx="8" cy="16" r="3"/><circle cx="8" cy="25" r="3"/></g></svg><div style="position:absolute;left:382px;top:749px;width:1524px;height:112px;background:#fff;border-bottom:1px solid #e2e2e2;border-radius:4px 13px 13px 4px;box-sizing:border-box"></div><svg style="position:absolute;left:403px;top:756px" width="74" height="96" viewBox="0 0 74 96">
<rect x="0" y="0" width="74" height="96" fill="#f4f4f4"/>
<defs><linearGradient id="eg" x1="0" y1="0" x2="0" y2="1"><stop offset="0" stop-color="#6a6e66"/><stop offset="0.6" stop-color="#5e625b"/><stop offset="1" stop-color="#2e312f"/></linearGradient></defs>
<rect x="1" y="2" width="72" height="76" fill="url(#eg)"/>
<path d="M48 14 q3 -7 10 -5 q6 -4 10 2 q6 0 5 7 H46 q-3 -2 2 -4z" fill="#7d7870" opacity="0.6"/>
<path d="M3 22 q2 -5 8 -3 q5 -2 7 3 H3z" fill="#7a756d" opacity="0.5"/>
<path d="M46 26 q3 -5 9 -3 q5 -3 9 1 q6 0 6 6 H46z" fill="#757068" opacity="0.45"/>
<rect x="56" y="49" width="17" height="29" fill="#1c2230"/>
<path d="M14 62 q-4 -12 2 -20 q3 -5 7 -3 l2 -3 q2 -6 5 -7 q4 -1 5 5 l2 10 q4 -3 9 -6 q6 -4 10 -1 q3 3 -1 8 q-6 8 -14 14 l-6 5z" fill="#d9a688"/>
<path d="M24 40 l2 -8 q2 -5 5 -4 q3 1 2 6 l-2 8z" fill="#ecc0a0"/>
<path d="M12 27 q0 -7 8 -6 q3 -8 12 -7 q6 -6 14 0 q8 -1 9 7 q7 1 5 8 q-1 5 -8 5 H26 l-6 7 l1 -7 q-10 0 -9 -7z" fill="#f0a070" stroke="#fff" stroke-width="1.4"/>
<text x="19.5" y="29.5" font-family="Liberation Sans" font-weight="bold" font-size="5" fill="#3a2a20" textLength="30" lengthAdjust="spacingAndGlyphs">KITABOO Cloud</text>
<rect x="14" y="57" width="43" height="16" fill="#83837c" opacity="0.8"/>
<text x="16" y="61.5" font-family="Liberation Sans" font-size="4.5" fill="#e8e8e8" textLength="38" lengthAdjust="spacingAndGlyphs">Discover the Ultimate</text>
<text x="16" y="67.5" font-family="Liberation Sans" font-size="7" fill="#f0b020" textLength="38" lengthAdjust="spacingAndGlyphs">eBook Solution</text>
<rect x="18" y="70" width="33" height="1.4" fill="#ddd" opacity="0.7"/>
<rect x="1" y="78" width="72" height="16" fill="#3cbab4"/>
<rect x="24" y="82" width="24" height="7" fill="none" stroke="#1d7f7a" stroke-width="1"/>
<rect x="27" y="84.5" width="18" height="2" fill="#d8f4f2" opacity="0.7"/>
</svg><div class="t" style="left:493.00px;top:771.64px;font-size:19.2px;line-height:19.2px;color:#111;font-weight:bold;letter-spacing:0.247px;">General science test folio 13th -</div><div class="t" style="left:492.00px;top:792.64px;font-size:19.2px;line-height:19.2px;color:#111;font-weight:bold;letter-spacing:0.222px;">Updated 3rd time with glossar...</div><div class="t" style="left:492.00px;top:822.42px;font-size:15.8px;line-height:15.8px;color:#111;letter-spacing:1.022px;-webkit-text-stroke:0.25px #111;">13736d07-3359-4d45-b10e-</div><div class="t" style="left:816.00px;top:793.07px;font-size:20px;line-height:20px;color:#111;letter-spacing:1.477px;text-decoration:underline;text-decoration-thickness:1px;text-underline-offset:1px;">50</div><div class="t" style="left:922.70px;top:793.07px;font-size:20px;line-height:20px;color:#8a8a8a;">0</div><div class="t" style="left:1034.00px;top:793.07px;font-size:20px;line-height:20px;color:#111;letter-spacing:1.477px;text-decoration:underline;text-decoration-thickness:1px;text-underline-offset:1px;">50</div><div class="t" style="left:1147.30px;top:793.07px;font-size:20px;line-height:20px;color:#e60000;letter-spacing:1.477px;text-decoration:underline;text-decoration-thickness:1px;text-underline-offset:1px;">50</div><div class="t" style="left:1257.00px;top:793.07px;font-size:20px;line-height:20px;color:#8a8a8a;text-decoration:underline;text-decoration-thickness:1px;text-underline-offset:1px;">0</div><svg style="position:absolute;left:1380px;top:788px" width="28" height="30" viewBox="0 0 28 30"><g stroke="#111" stroke-width="1.3" fill="none">
<circle cx="8.7" cy="6.3" r="2.6"/><path d="M4.5 15 q0 -5.5 4.2 -5.5 q4.2 0 4.2 5.5"/>
<circle cx="20.5" cy="6.3" r="2.6"/><path d="M16.3 15 q0 -5.5 4.2 -5.5 q4.2 0 4.2 5.5"/>
<circle cx="8.7" cy="18.3" r="2.6"/><path d="M4.5 27 q0 -5.5 4.2 -5.5 q4.2 0 4.2 5.5"/>
<circle cx="20.5" cy="18.3" r="2.6"/><path d="M16.3 27 q0 -5.5 4.2 -5.5 q4.2 0 4.2 5.5"/></g></svg><div class="t" style="left:1415.00px;top:794.29px;font-size:19.5px;line-height:19.5px;color:#111;font-weight:bold;letter-spacing:-1.380px;">Classes</div><svg style="position:absolute;left:1527px;top:790px" width="28" height="28" viewBox="0 0 28 28"><g stroke="#111" stroke-width="1.3" fill="none">
<circle cx="13.3" cy="12.8" r="9.6"/><circle cx="13.3" cy="9.8" r="3.6"/>
<path d="M7.2 20.3 q0.5 -6.7 6.1 -6.7 q5.6 0 6.1 6.7"/></g></svg><div class="t" style="left:1559.60px;top:794.14px;font-size:19.2px;line-height:19.2px;color:#111;font-weight:bold;letter-spacing:-0.766px;">Users</div><div style="position:absolute;left:1648px;top:777px;width:175px;height:54px;border:1.3px solid #1e00cc;border-radius:27px;box-sizing:border-box"></div><div class="t" style="left:1674.20px;top:795.51px;font-size:17.7px;line-height:17.7px;color:#1e00cc;letter-spacing:0.183px;">Generate Code</div><svg style="position:absolute;left:1852px;top:790px" width="16" height="32" viewBox="0 0 16 32"><g fill="#000"><circle cx="8" cy="7" r="3"/><circle cx="8" cy="16" r="3"/><circle cx="8" cy="25" r="3"/></g></svg></div></div>
<div style="position:absolute;left:382px;top:247px;width:1524px;height:1px;background:#cfd8e6"></div>
<div class="t" style="left:403.60px;top:211.01px;font-size:18.3px;line-height:18.3px;color:#6b6b6b;letter-spacing:0.327px;">Title</div>
<div class="t" style="left:807.80px;top:211.01px;font-size:18.3px;line-height:18.3px;color:#6b6b6b;letter-spacing:0.487px;">Total</div>
<div class="t" style="left:912.60px;top:211.01px;font-size:18.3px;line-height:18.3px;color:#6b6b6b;letter-spacing:0.310px;">Remaining</div>
<div class="t" style="left:1024.00px;top:211.01px;font-size:18.3px;line-height:18.3px;color:#6b6b6b;letter-spacing:0.749px;">Distributed</div>
<div class="t" style="left:1138.00px;top:211.01px;font-size:18.3px;line-height:18.3px;color:#6b6b6b;letter-spacing:0.531px;">Unused</div>
<div class="t" style="left:1247.00px;top:211.01px;font-size:18.3px;line-height:18.3px;color:#6b6b6b;letter-spacing:0.251px;">Consumed</div>
<div class="t" style="left:1421.60px;top:211.01px;font-size:18.3px;line-height:18.3px;color:#6b6b6b;letter-spacing:0.628px;">Distribute</div>
<div style="position:absolute;left:399px;top:297px;width:344px;height:124px;border:6px solid #e31b1b;box-sizing:border-box"></div>
<div style="position:absolute;left:1502px;top:296px;width:140px;height:114px;border:6px solid #e31b1b;box-sizing:border-box"></div>
<div style="position:absolute;left:1906px;top:195px;width:9px;height:637px;background:#fff;border-left:1px solid #dddddd;border-right:1px solid #dddddd;box-sizing:border-box"></div>
<div style="position:absolute;left:1906px;top:255px;width:9px;height:22px;background:#dadada;border-radius:5px"></div>
<div style="position:absolute;left:0px;top:829px;width:1915px;height:1px;background:#b9c59a"></div>
<div style="position:absolute;left:0px;top:830px;width:1915px;height:2px;background:#e2f0a4"></div></body></html>
